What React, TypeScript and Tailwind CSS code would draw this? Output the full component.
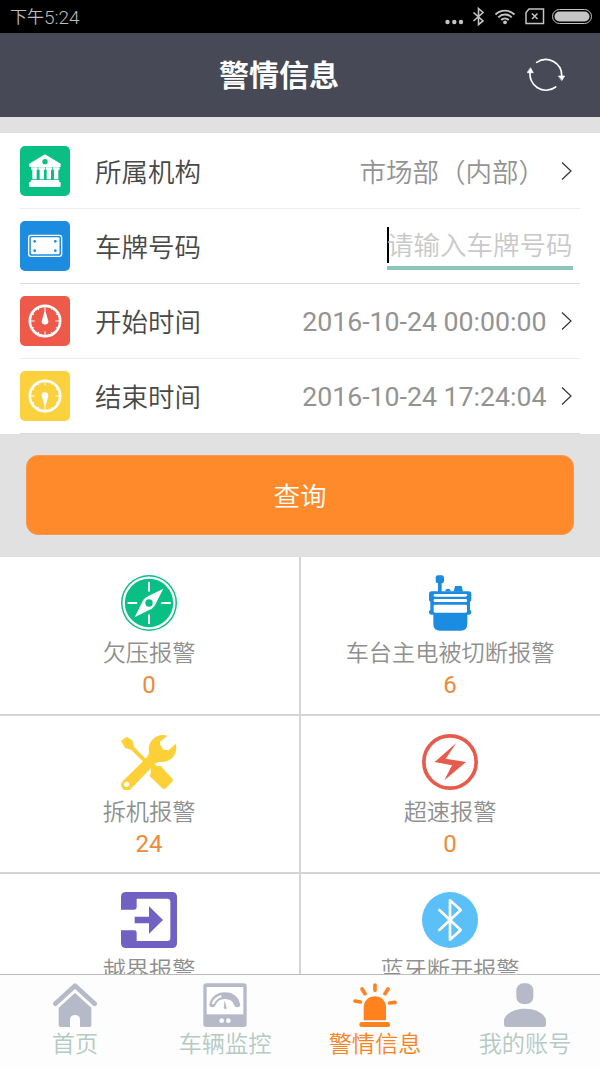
import type { ReactNode } from "react";
import clsx from "clsx";

function BankIcon() {
  return (
    <svg viewBox="0 0 150 150" className="size-full">
      <g fill="#fff">
        <path d="M75 25 L122 53 V63 H28 V53 Z" />
        <path d="M33 64h20v7h-3v29h-13V71h-4z M55 64h20v7h-3v29H59V71h-4z M77 64h20v7h-4v29H80V71h-3z M99 64h20v7h-4v29h-13V71h-3z" />
        <rect x="32" y="102" width="86" height="10" rx="4" />
        <rect x="27" y="108" width="95" height="15" rx="4" />
      </g>
      <circle cx="75" cy="47" r="8" fill="#0abf83" />
    </svg>
  );
}

function PlateIcon() {
  return (
    <svg viewBox="0 0 150 150" className="size-full">
      <rect x="26" y="43" width="99" height="63" rx="7" fill="none" stroke="#fff" strokeWidth="4" />
      <rect x="32.500" y="49" width="86" height="51" rx="3" fill="#fff" />
      <g fill="#1c8ce0">
        <circle cx="44" cy="61" r="4" />
        <circle cx="106" cy="61" r="4" />
        <circle cx="44" cy="89" r="4" />
        <circle cx="106" cy="89" r="4" />
      </g>
    </svg>
  );
}

function GaugeIcon({ down = false }: { down?: boolean }) {
  return (
    <svg viewBox="0 0 150 150" className="size-full">
      <circle cx="75" cy="75" r="45.500" fill="none" stroke="#fff" strokeWidth="8" />
      <g stroke="#fff" strokeWidth="3">
        {[0, 30, 60, 90, 120, 150, 180, 210, 240, 270, 300, 330].map((deg) => (
          <path
            key={deg}
            d={deg % 90 === 0 ? "M75 30v14" : "M75 30v7"}
            transform={`rotate(${deg} 75 75)`}
          />
        ))}
      </g>
      <path
        d="M75 40 L85 76 A10 10 0 1 1 65 76 Z"
        fill="#fff"
        transform={down ? "rotate(180 75 75)" : undefined}
      />
    </svg>
  );
}

function CompassIcon() {
  return (
    <svg viewBox="0 0 168 168" className="size-full">
      <circle cx="84" cy="84" r="84" fill="#0abf83" />
      <circle cx="84" cy="84" r="76" fill="none" stroke="#fff" strokeWidth="7" />
      <path
        d="M84 23v24M84 121v24M22 84h24M123 84h24"
        stroke="#fff"
        strokeWidth="6"
        strokeLinecap="round"
      />
      <path d="M127 41 L101 92 Q94 102 84 105 L41 127 L67 74 Q74 66 84 62 Z" fill="#fff" />
      <circle cx="84" cy="84" r="11" fill="#0abf83" />
    </svg>
  );
}

function TerminalIcon() {
  return (
    <svg viewBox="0 0 168 168" className="size-full">
      <g fill="#1c8ce0">
        <rect x="41" y="1" width="25" height="24" rx="7" />
        <rect x="48" y="20" width="11" height="32" />
        <path d="M70 49a8 8 0 0 1 16 0z" />
        <path d="M95 50l4-17h20l4 17z" />
        <path d="M29 49h111q8 0 8 8v17q0 5-4 6v24q4 2 4 7 0 8-8 8h-4v28q0 20-20 20H54q-20 0-20-20v-28h-5q-8 0-8-8 0-5 4-7V80q-4-1-4-6V57q0-8 8-8z" />
      </g>
      <g fill="#fff">
        <rect x="35" y="57" width="100" height="8" rx="4" />
        <rect x="35" y="72" width="100" height="9" rx="4" />
        <rect x="35" y="89" width="100" height="24" rx="4" />
      </g>
    </svg>
  );
}

function ToolsIcon() {
  return (
    <svg viewBox="0 0 168 168" className="size-full" fill="#fcd036">
      <path d="M0 20L18 8l17 13 4 18 44 44-8 8-45-44-18-5z" />
      <path d="M88 103q-3-4 2-7l6-5q4-2 7 2l7 4q5-4 10 0l34 37q4 5 0 9l-20 20q-5 4-10 0L88 128q-4-5 2-12z" />
      <path
        fillRule="evenodd"
        d="M139 5A43 43 0 0 0 84 55Q83 65 78 70L8 139A17 17 0 1 0 32 162L99 92Q107 83 118 84A43 43 0 0 0 164 29L143 49L127 47L118 33L117 23ZM17 143A8 8 0 1 1 16.9 143Z"
      />
    </svg>
  );
}

function BoltIcon() {
  return (
    <svg viewBox="0 0 168 168" className="size-full">
      <circle cx="84" cy="84" r="78.500" fill="none" stroke="#e85a4b" strokeWidth="11" />
      <path d="M103 27L38 84L90 94L67 139L132 84L71 74Z" fill="#e85a4b" />
    </svg>
  );
}

function CrossBorderIcon() {
  return (
    <svg viewBox="0 0 168 168" className="size-full" fill="#7061c3">
      <path d="M15 0H153Q168 0 168 15V153Q168 168 153 168H15Q0 168 0 153V115H40Q47 115 47 122V147H139Q148 147 148 138V29Q148 20 139 20H47V46Q47 53 40 53H0V15Q0 0 15 0Z" />
      <path d="M41 74H84V43L126 84L84 125V94H41Z" />
    </svg>
  );
}

function BluetoothIcon() {
  return (
    <svg viewBox="0 0 168 168" className="size-full">
      <circle cx="84" cy="84" r="84" fill="#5bc0f8" />
      <path
        d="M52 54L116 114L84 143V25L116 54L52 114"
        fill="none"
        stroke="#fff"
        strokeWidth="8"
        strokeLinecap="round"
        strokeLinejoin="round"
      />
    </svg>
  );
}

function HomeIcon() {
  return (
    <svg viewBox="0 0 132 132" className="size-full" fill="#b6bac8">
      <path
        d="M7 62L66 8L125 62"
        fill="none"
        stroke="#b6bac8"
        strokeWidth="14"
        strokeLinecap="round"
        strokeLinejoin="round"
      />
      <path d="M66 30L115 74V127Q115 132 110 132H81V111Q81 96 66 96T51 111V132H22Q17 132 17 127V74Z" />
    </svg>
  );
}

function MonitorIcon() {
  return (
    <svg viewBox="0 0 132 132" className="size-full">
      <rect x="1" y="1" width="130" height="131" rx="9" fill="#b6bac8" />
      <rect x="11" y="12" width="110" height="82" fill="#fff" />
      <path
        d="M19 67C22 42 41 28 66 28S108 42 112 67Q111 73 103 73T93 66Q88 48 66 48T38 66Q36 73 28 73T19 67Z"
        fill="#b6bac8"
      />
      <path d="M26 63Q31 43 54 36L56 43Q39 47 33 64Z" fill="#fff" />
      <path d="M65 52L71 76Q67 81 62 76Z" fill="#b6bac8" />
      <circle cx="56" cy="113" r="7" fill="#fff" />
      <circle cx="76" cy="113" r="7" fill="#fff" />
    </svg>
  );
}

function SirenIcon() {
  return (
    <svg viewBox="0 0 132 132" className="size-full" fill="#ff821e">
      <path
        d="M66 6v16M27 18l9 14M105 18l-9 14M6 54l16 3M126 58l-16 2"
        stroke="#ff821e"
        strokeWidth="11"
        strokeLinecap="round"
      />
      <path d="M32 112V74C32 28 99 28 99 74V112Z" />
      <rect x="19" y="117" width="92" height="15" rx="7" />
    </svg>
  );
}

function UserIcon() {
  return (
    <svg viewBox="0 0 132 132" className="size-full" fill="#b6bac8">
      <rect x="40" y="1" width="51" height="62" rx="21" />
      <path d="M3 125V110C9 88 39 77 66 77S123 88 129 110V125Q129 132 122 132H10Q3 132 3 125Z" />
    </svg>
  );
}

function StatusBar() {
  return (
    <div className="flex h-[33px] shrink-0 items-center justify-between bg-black pl-[10px] pr-[8px] text-[#bcbcbc]">
      <span className="flex items-center pt-px text-[17px] leading-none">
        下午
        <span className="text-[19px]">5:24</span>
      </span>
      <svg width="148" height="33" viewBox="0 0 148 33" fill="none" stroke="#c4c4c4">
        <g fill="#c4c4c4" stroke="none">
          <circle cx="3.5" cy="22" r="2.2" />
          <circle cx="10.3" cy="22" r="2.2" />
          <circle cx="17" cy="22" r="2.2" />
          <circle cx="61" cy="22.3" r="1.9" />
          <rect x="110.500" y="11.500" width="35" height="10" rx="5" />
        </g>
        <path d="M29.500 12.500l9.500 8.500-4.500 3.500V8.500L39 12.500 29.500 21" strokeWidth="1.6" />
        <path
          d="M51.500 14.500a13.500 13.500 0 0 1 19 0M54.300 17.300a9.500 9.500 0 0 1 13.400 0M57.200 20a5.500 5.500 0 0 1 7.600 0"
          strokeWidth="1.9"
        />
        <path d="M85 9H99.500V23.500H82V12.500z" strokeWidth="1.5" />
        <path d="M88 13.500l5.500 5.500M93.500 13.500L88 19" strokeWidth="1.5" />
        <rect x="108.500" y="9.500" width="39" height="14" rx="7" />
      </svg>
    </div>
  );
}

function Chevron() {
  return (
    <svg
      viewBox="0 0 12 20"
      className="ml-[14px] mr-[7.5px] h-5 w-3 shrink-0"
      fill="none"
      stroke="#333"
      strokeWidth="1.2"
    >
      <path d="M1 1.500L10 10L1 18.500" />
    </svg>
  );
}

type FilterRowProps = {
  icon: ReactNode;
  color: string;
  label: string;
  light?: boolean;
  children: ReactNode;
};

function FilterRow({ icon, color, label, light, children }: FilterRowProps) {
  return (
    <div
      className={clsx(
        "mx-5 flex h-[75px] items-center border-b",
        light ? "border-[#ececec]" : "border-[#d9d9d9]"
      )}
    >
      <div className={clsx("size-[50px] shrink-0 overflow-hidden rounded-[5px]", color)}>{icon}</div>
      <span className="ml-[25px] pt-[3px] text-[26.500px] text-[#484848]">{label}</span>
      <div className="flex flex-1 items-center justify-end text-[26.500px] text-[#939393]">
        {children}
      </div>
    </div>
  );
}

const alarms = [
  { label: "欠压报警", count: 0, icon: <CompassIcon /> },
  { label: "车台主电被切断报警", count: 6, icon: <TerminalIcon /> },
  { label: "拆机报警", count: 24, icon: <ToolsIcon /> },
  { label: "超速报警", count: 0, icon: <BoltIcon /> },
  { label: "越界报警", count: 0, icon: <CrossBorderIcon /> },
  { label: "蓝牙断开报警", count: 0, icon: <BluetoothIcon /> },
];

const tabs = [
  { label: "首页", icon: <HomeIcon /> },
  { label: "车辆监控", icon: <MonitorIcon /> },
  { label: "警情信息", icon: <SirenIcon />, active: true },
  { label: "我的账号", icon: <UserIcon /> },
];

export default function App() {
  return (
    <div className="flex h-[1067px] w-[600px] flex-col overflow-hidden bg-[#e1e1e1] font-['Roboto','Noto_Sans_CJK_SC',sans-serif] font-[350]">
      <StatusBar />

      <header className="grid h-[84px] shrink-0 grid-cols-[219px_1fr_auto] items-center bg-[#474a56]">
        <h1 className="col-start-2 pt-px text-[30px] font-bold text-white">警情信息</h1>
        <svg
          viewBox="0 0 114 102"
          className="mr-[35px] h-[34px] w-[38px]"
          fill="none"
          stroke="#fff"
          strokeWidth="5"
          strokeLinecap="round"
        >
          <path d="M29 13A48 48 0 0 1 104 55M86 87A48 48 0 0 1 10 39" />
          <path d="M95 54h18l-8 13zM1 44h18l-8-14z" fill="#fff" strokeWidth="2" />
        </svg>
      </header>

      <section className="mt-4 shrink-0 bg-white pt-px">
        <FilterRow icon={<BankIcon />} color="bg-[#0abf83]" label="所属机构" light>
          <span className="mr-[1.500px] pt-[3px]">市场部（内部）</span>
          <Chevron />
        </FilterRow>
        <FilterRow icon={<PlateIcon />} color="bg-[#1c8ce0]" label="车牌号码">
          <div className="mr-[7px] mt-[5px] flex h-[43px] w-[186px] items-start whitespace-nowrap border-b-4 border-[#89c7bd]">
            <span className="h-9 w-[2px] shrink-0 bg-black" />
            <span className="-ml-[2px] leading-[37px] text-[#c9c9c9]">请输入车牌号码</span>
          </div>
        </FilterRow>
        <FilterRow icon={<GaugeIcon />} color="bg-[#ee594a]" label="开始时间" light>
          <span className="pt-[2px] text-[26.700px] font-normal">2016-10-24 00:00:00</span>
          <Chevron />
        </FilterRow>
        <FilterRow icon={<GaugeIcon down />} color="bg-[#fbd13d]" label="结束时间">
          <span className="pt-[2px] text-[26.700px] font-normal">2016-10-24 17:24:04</span>
          <Chevron />
        </FilterRow>
      </section>

      <div className="h-[123px] shrink-0 px-[26px] pt-[21px]">
        <button className="h-20 w-full rounded-[12px] border border-[#f59a50] bg-[#ff8a2b] pt-[3px] text-[26.500px] text-white">
          查询
        </button>
      </div>

      <section className="grid min-h-0 flex-1 grid-cols-[301px_299px] grid-rows-[159px_158px_159px] overflow-hidden bg-white">
        {alarms.map((alarm) => (
          <div
            key={alarm.label}
            className="flex flex-col items-center border-b-2 border-[#d5d5d5] pt-[18px] pr-px odd:border-r-2"
          >
            <div className="size-14">{alarm.icon}</div>
            <p className="mt-[6px] text-[23.200px] leading-8 text-[#8f8f8f]">{alarm.label}</p>
            <p className="text-[24px] leading-8 font-normal text-[#f08a3a]">{alarm.count}</p>
          </div>
        ))}
      </section>

      <nav className="grid h-[93px] shrink-0 grid-cols-4 border-t border-[#bbb] bg-[#fdfdfd]">
        {tabs.map((tab) => (
          <div key={tab.label} className="flex flex-col items-center pt-2">
            <div className="size-11">{tab.icon}</div>
            <span
              className={clsx(
                "pt-px text-[23.200px] leading-8",
                tab.active ? "text-[#ff821e]" : "text-[#b5cac4]"
              )}
            >
              {tab.label}
            </span>
          </div>
        ))}
      </nav>
    </div>
  );
}
